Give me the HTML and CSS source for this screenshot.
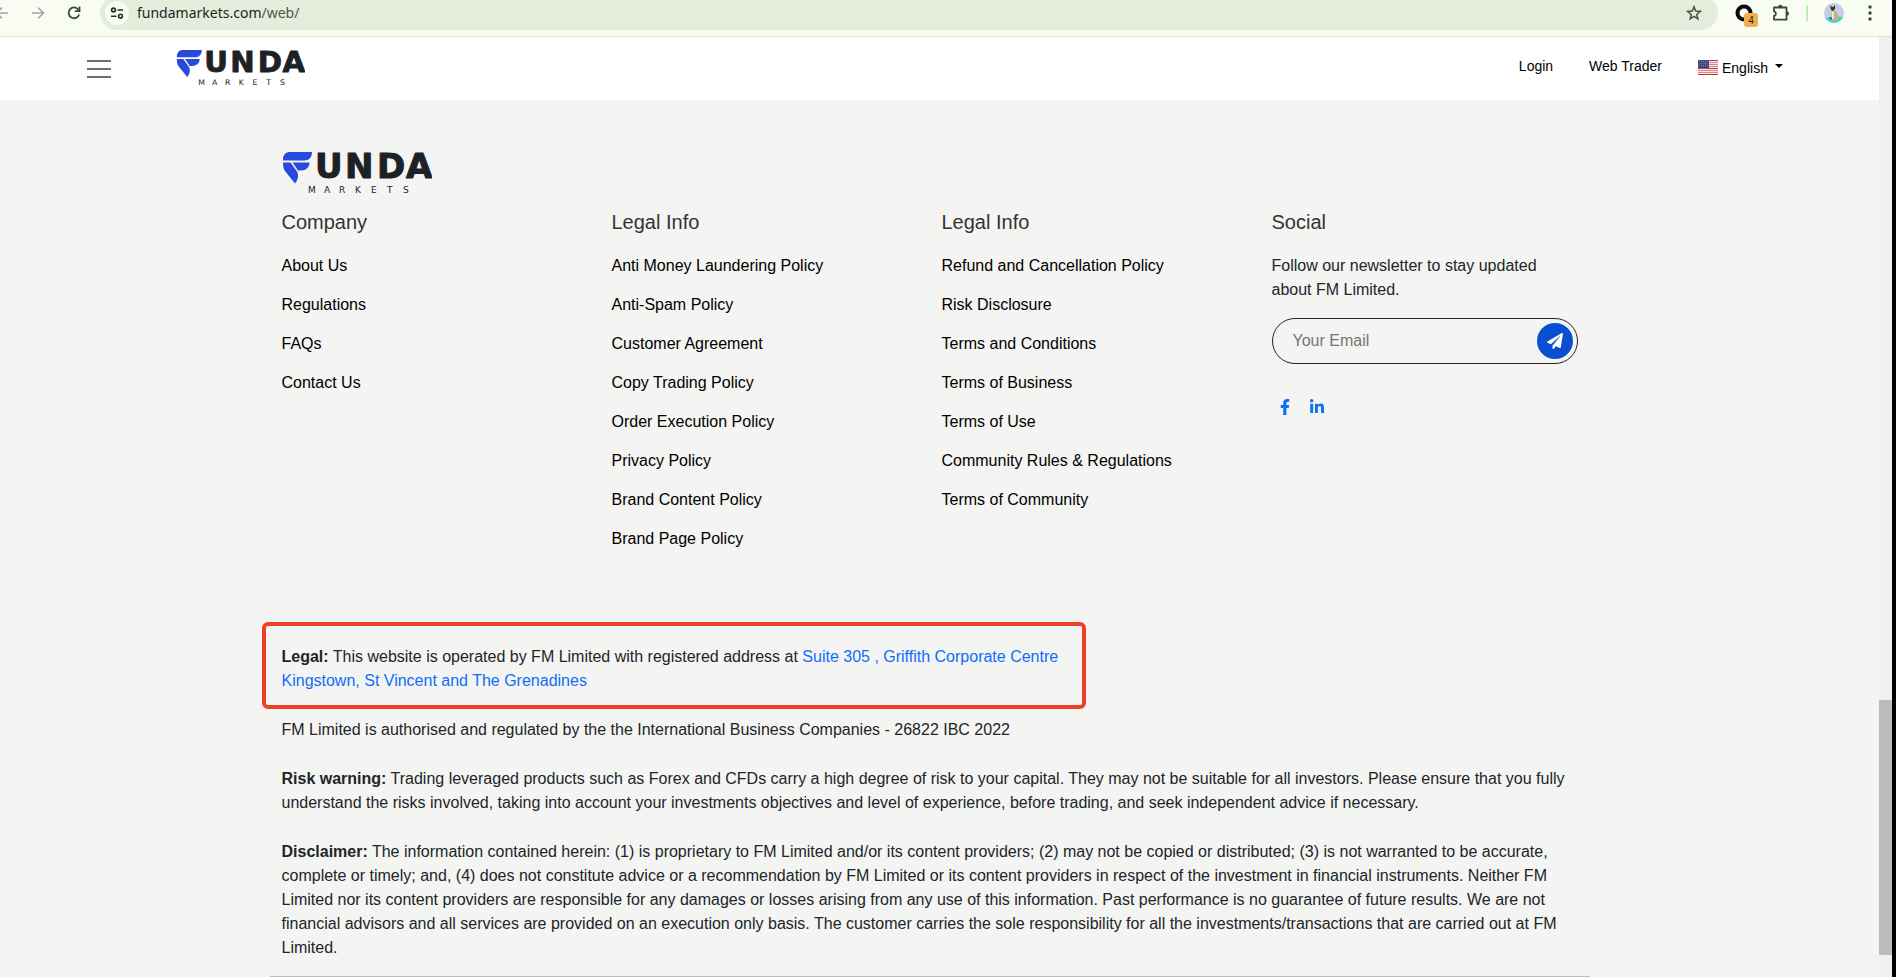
FILE: index.html
```html
<!DOCTYPE html>
<html lang="en">
<head>
  <meta charset="UTF-8">
  <meta name="viewport" content="width=device-width, initial-scale=1.0">
  <title>Funda Markets</title>
  <link rel="stylesheet" href="styles.css">
</head>
<body>
  <div class="browser">
    <div class="browser-bar">
      <button class="bar-btn back" aria-label="Back">
        <svg width="16" height="16" viewBox="0 0 16 16" fill="none" stroke="#a3a7a0" stroke-width="1.6"><path d="M14 8H3M8 2.500 2.500 8 8 13.500"/></svg>
      </button>
      <button class="bar-btn forward" aria-label="Forward">
        <svg width="16" height="16" viewBox="0 0 16 16" fill="none" stroke="#a3a7a0" stroke-width="1.6"><path d="M2 8h11M8 2.500 13.500 8 8 13.500"/></svg>
      </button>
      <button class="bar-btn reload" aria-label="Reload">
        <svg width="16" height="16" viewBox="0 0 16 16" fill="none" stroke="#3a4a38" stroke-width="1.8"><path d="M13.200 9.500A5.400 5.400 0 1 1 12.300 4.500L13.500 6"/><path d="M13.500 1.500V6.200H8.800"/></svg>
      </button>
      <div class="address">
        <button class="site-info" aria-label="Site information">
          <svg width="14" height="14" viewBox="0 0 14 14" fill="none" stroke="#20301f" stroke-width="1.6"><circle cx="3.500" cy="4" r="1.900"/><path d="M7.500 4H13M1 10.200H6.500"/><circle cx="10.500" cy="10.200" r="1.900"/></svg>
        </button>
        <span class="url">fundamarkets.com<span class="path">/web/</span></span>
        <button class="bar-btn star" aria-label="Bookmark">
          <svg width="16" height="16" viewBox="0 0 16 16" fill="none" stroke="#4a5348" stroke-width="1.5"><path d="M8 1.800 9.700 6.100 14.300 6.400 10.800 9.400 11.900 13.900 8 11.400 4.100 13.900 5.200 9.400 1.700 6.400 6.300 6.100Z"/></svg>
        </button>
      </div>
      <button class="bar-btn extension" aria-label="Extension">
        <svg width="18" height="18" viewBox="0 0 18 18" fill="none" stroke="#0a0a0a" stroke-width="4"><circle cx="9" cy="9" r="6.500"/></svg>
        <span class="badge">4</span>
      </button>
      <button class="bar-btn puzzle" aria-label="Extensions">
        <svg width="18" height="18" viewBox="0 0 18 18" fill="none" stroke="#3a4a38" stroke-width="1.800" stroke-linejoin="round"><path d="M2 3.500H14.500V15.700H2V12A2.400 2.400 0 0 0 2 7.300Z"/><path d="M6 3A2.300 2.300 0 0 1 10.600 3ZM15 7.500A2.100 2.100 0 0 1 15 11.700Z" fill="#3a4a38" stroke="none"/></svg>
      </button>
      <span class="divider"></span>
      <button class="bar-btn avatar" aria-label="Profile">
        <svg width="20" height="20" viewBox="0 0 20 20"><defs><clipPath id="round"><circle cx="10" cy="10" r="10"/></clipPath></defs><g clip-path="url(#round)"><path fill="#c5cee9" d="M0 0h20v20H0z"/><path fill="#4ed0cb" d="M0 15q10-2 20-1v6H0z"/><path fill="#c8ad84" d="M8 7l4 1 3 6-1 3H7z"/><path fill="#eee4cf" d="M8 8l2 1v7H8z"/><path fill="#3a342f" d="M6 2l2 2h1l2-2v4L9 8 7 7zM5 14l3 1-1 2z"/></g></svg>
      </button>
      <button class="bar-btn menu-dots" aria-label="Menu">
        <svg width="4" height="16" viewBox="0 0 4 16" fill="#3a4a38"><circle cx="2" cy="2" r="1.700"/><circle cx="2" cy="8" r="1.700"/><circle cx="2" cy="14" r="1.700"/></svg>
      </button>
    </div>

    <div class="viewport">
      <div class="page">
        <header class="header">
          <button class="hamburger" aria-label="Open menu"><span></span><span></span><span></span></button>
          <a class="brand" href="#" aria-label="Funda Markets">
            <svg viewBox="0 0 150 42">
              <g fill="#2749dc">
                <path d="M8 0H30C30 5 27 8.500 22 8.500H1V6C2 2 4 0 8 0Z"/>
                <path d="M1 10.500H8.500L15 19.500C17 23 16 28 13 31.500L3 19C1.500 17 1 14 1 10.500Z"/>
                <path d="M10.500 10.500H27.500C27.500 15 24 18.500 19 18.500H16Z"/>
              </g>
              <text class="logo-name" x="33 63 95 124" y="26">UNDA</text>
              <text class="logo-sub" x="26 42 57 73 89 105 121" y="41">MARKETS</text>
            </svg>
          </a>
          <nav class="nav">
            <a href="#">Login</a>
            <a href="#">Web Trader</a>
            <div class="language">
              <svg width="20" height="15" viewBox="0 0 20 15" aria-hidden="true"><path fill="#f4e4e5" d="M0 0h20v15H0z"/><path stroke="#c43c48" d="M0 .5h20M0 14.500h20M0 8.500h20"/><path stroke="#d98a91" d="M0 2.500h20M0 4.500h20M0 6.500h20M0 10.500h20M0 12.500h20"/><path fill="#3b4a79" d="M0 0h11v8H0z"/><path stroke="#7280a8" stroke-dasharray="1 1" d="M1 1.500h9M2 3.500h8M1 5.500h9"/></svg>
              <select aria-label="Language">
                <option>English</option>
              </select>
            </div>
          </nav>
        </header>

        <footer class="footer">
          <div class="container">
            <a class="footer-logo" href="#" aria-label="Funda Markets">
              <svg viewBox="0 0 150 42">
                <g fill="#2749dc">
                  <path d="M8 0H30C30 5 27 8.500 22 8.500H1V6C2 2 4 0 8 0Z"/>
                  <path d="M1 10.500H8.500L15 19.500C17 23 16 28 13 31.500L3 19C1.500 17 1 14 1 10.500Z"/>
                  <path d="M10.500 10.500H27.500C27.500 15 24 18.500 19 18.500H16Z"/>
                </g>
                <text class="logo-name" x="33 63 95 124" y="26">UNDA</text>
                <text class="logo-sub" x="26 42 57 73 89 105 121" y="41">MARKETS</text>
              </svg>
            </a>
            <div class="columns">
              <div class="column">
                <h5>Company</h5>
                <ul>
                  <li><a href="#">About Us</a></li>
                  <li><a href="#">Regulations</a></li>
                  <li><a href="#">FAQs</a></li>
                  <li><a href="#">Contact Us</a></li>
                </ul>
              </div>
              <div class="column">
                <h5>Legal Info</h5>
                <ul>
                  <li><a href="#">Anti Money Laundering Policy</a></li>
                  <li><a href="#">Anti-Spam Policy</a></li>
                  <li><a href="#">Customer Agreement</a></li>
                  <li><a href="#">Copy Trading Policy</a></li>
                  <li><a href="#">Order Execution Policy</a></li>
                  <li><a href="#">Privacy Policy</a></li>
                  <li><a href="#">Brand Content Policy</a></li>
                  <li><a href="#">Brand Page Policy</a></li>
                </ul>
              </div>
              <div class="column">
                <h5>Legal Info</h5>
                <ul>
                  <li><a href="#">Refund and Cancellation Policy</a></li>
                  <li><a href="#">Risk Disclosure</a></li>
                  <li><a href="#">Terms and Conditions</a></li>
                  <li><a href="#">Terms of Business</a></li>
                  <li><a href="#">Terms of Use</a></li>
                  <li><a href="#">Community Rules &amp; Regulations</a></li>
                  <li><a href="#">Terms of Community</a></li>
                </ul>
              </div>
              <div class="column">
                <h5>Social</h5>
                <p>Follow our newsletter to stay updated about FM Limited.</p>
                <form class="newsletter">
                  <input type="email" placeholder="Your Email" aria-label="Your Email">
                  <button type="button" aria-label="Subscribe">
                    <svg width="16" height="16" viewBox="0 0 512 512" fill="#fff"><path d="M476 3.200L12.500 270.600c-18.100 10.400-15.800 35.600 2.200 43.200L121 358.400l287.300-253.200c5.500-4.900 13.300 2.600 8.600 8.300L176 407v80.500c0 23.600 28.500 32.900 42.500 15.800L282 426l124.600 52.200c14.200 6 30.400-2.900 33-18.200l72-432C515 7.800 493.300-6.800 476 3.200z"/></svg>
                  </button>
                </form>
                <div class="social">
                  <a href="#" aria-label="Facebook"><svg width="10" height="16" viewBox="0 0 320 512"><path d="M279.140 288l14.220-92.660h-88.910v-60.130c0-25.350 12.420-50.060 52.240-50.060h40.420V6.260S260.430 0 225.360 0c-73.220 0-121.080 44.380-121.080 124.720v70.620H22.890V288h81.390v224h100.170V288z"/></svg></a>
                  <a href="#" aria-label="LinkedIn"><svg width="14" height="16" viewBox="0 0 448 512"><path d="M100.280 448H7.400V148.900h92.880zM53.790 108.100C24.090 108.100 0 83.500 0 53.800a53.790 53.790 0 0 1 107.580 0c0 29.700-24.100 54.300-53.790 54.300zM447.900 448h-92.680V302.400c0-34.700-.7-79.200-48.290-79.200-48.290 0-55.690 37.700-55.690 76.700V448h-92.780V148.900h89.080v40.800h1.300c12.400-23.500 42.690-48.300 88.180-48.300 94.280 0 111.280 62.100 111.280 142.800V448z"/></svg></a>
                </div>
              </div>
            </div>

            <div class="legal">
              <p class="address-note"><b>Legal:</b> This website is operated by FM Limited with registered address at <a href="#">Suite 305 , Griffith Corporate Centre<br>Kingstown, St Vincent and The Grenadines</a></p>
              <p>FM Limited is authorised and regulated by the the International Business Companies - 26822 IBC 2022</p>
              <p><b>Risk warning:</b> Trading leveraged products such as Forex and CFDs carry a high degree of risk to your capital. They may not be suitable for all investors. Please ensure that you fully understand the risks involved, taking into account your investments objectives and level of experience, before trading, and seek independent advice if necessary.</p>
              <p><b>Disclaimer:</b> The information contained herein: (1) is proprietary to FM Limited and/or its content providers; (2) may not be copied or distributed; (3) is not warranted to be accurate, complete or timely; and, (4) does not constitute advice or a recommendation by FM Limited or its content providers in respect of the investment in financial instruments. Neither FM Limited nor its content providers are responsible for any damages or losses arising from any use of this information. Past performance is no guarantee of future results. We are not financial advisors and all services are provided on an execution only basis. The customer carries the sole responsibility for all the investments/transactions that are carried out at FM Limited.</p>
            </div>
          </div>
          <hr class="line">
        </footer>
      </div>
      <div class="scrollbar"><div class="thumb"></div></div>
    </div>
  </div>
</body>
</html>
```
FILE: styles.css
```css
*,
*::before,
*::after {
  box-sizing: border-box;
}

body {
  margin: 0;
  font-family: "Liberation Sans", Arial, sans-serif;
  font-size: 16px;
  line-height: 24px;
  color: #212529;
}

a {
  color: #0d6efd;
  text-decoration: none;
}

button {
  padding: 0;
  border: none;
  background: none;
  cursor: pointer;
}

svg {
  display: block;
}

.browser {
  display: flex;
  flex-direction: column;
  height: 100vh;
  overflow: hidden;
  border-right: 4px solid #000;
}

/* browser toolbar */
.browser-bar {
  display: flex;
  flex: none;
  align-items: center;
  height: 37px;
  padding: 0 20px 10px 0;
  background-color: #f8fcf2;
  border-bottom: 1px solid #dce4d0;
}

.bar-btn {
  flex: none;
}

.back {
  margin-left: -6px;
}

.forward {
  margin-left: 20px;
}

.reload {
  margin-left: 20px;
}

.address {
  display: flex;
  flex: 1;
  align-items: center;
  height: 34px;
  margin-left: 18px;
  padding: 0 16px 0 5px;
  border-radius: 17px;
  background-color: #e4ecdc;
}

.site-info {
  display: flex;
  align-items: center;
  justify-content: center;
  width: 24px;
  height: 24px;
  border-radius: 50%;
  background-color: #f8fcf2;
}

.url {
  flex: 1;
  margin-left: 8px;
  font-family: "Noto Sans", "Open Sans", sans-serif;
  font-size: 14px;
  color: #1c1f1b;
}

.url .path {
  color: #4f564d;
}

.extension {
  position: relative;
  margin-left: 17px;
}

.badge {
  position: absolute;
  left: 9px;
  top: 9px;
  width: 14px;
  height: 14px;
  border-radius: 3px;
  background-color: #f0ad4e;
  font-family: "Liberation Sans", Arial, sans-serif;
  font-size: 10px;
  line-height: 15px;
  color: #222;
}

.puzzle {
  margin-left: 19px;
}

.divider {
  width: 2px;
  height: 16px;
  margin: 0 16px;
  background-color: #bdeeb0;
}

.menu-dots {
  margin-left: 24px;
}

/* page and scrollbar */
.viewport {
  display: flex;
  flex: 1;
  min-height: 0;
}

.page {
  flex: 1;
  background-color: #f4f4f2;
}

.scrollbar {
  display: grid;
  grid-template-rows: 663fr 255fr 22fr;
  width: 13px;
  background-color: #f0f0f0;
}

.thumb {
  grid-row: 2;
  background-color: #bcbcbc;
}

.header {
  display: flex;
  align-items: center;
  height: 63px;
  padding: 0 96px 0 87px;
  background-color: #fff;
}

.hamburger {
  display: flex;
  flex-direction: column;
  gap: 6px;
  width: 24px;
}

.hamburger span {
  height: 2px;
  background-color: #6f6f6f;
}

.brand {
  width: 129px;
  margin-left: 65px;
}

.logo-name {
  font-family: "DejaVu Sans", sans-serif;
  font-size: 34px;
  font-weight: bold;
  fill: #1c2126;
  stroke: #1c2126;
  stroke-linejoin: round;
}

.logo-sub {
  font-family: "DejaVu Sans", sans-serif;
  font-size: 9px;
  fill: #1c2126;
}

.nav {
  display: flex;
  align-items: center;
  gap: 36px;
  margin-left: auto;
  padding-bottom: 6px;
  font-size: 14px;
}

.nav a {
  color: #000;
}

.language {
  display: flex;
  align-items: center;
  gap: 4px;
  padding-top: 4px;
}

.language::after {
  content: "";
  margin: 0 0 4px -8px;
  border: 4px solid transparent;
  border-top-color: #000;
  border-bottom: 0;
  pointer-events: none;
}

.language select {
  appearance: none;
  padding: 0 11px 0 0;
  border: none;
  background: none;
  font-family: inherit;
  font-size: 14px;
  color: #000;
}

/* footer */
.footer {
  padding: 52px 20px 0 0;
}

.container {
  max-width: 1320px;
  margin: 0 auto;
  padding: 0 12px;
}

.footer-logo {
  display: block;
  width: 150px;
  margin-bottom: 16px;
}

.columns {
  display: grid;
  grid-template-columns: repeat(4, 1fr);
  gap: 24px;
}

.column h5 {
  margin: 0 0 20px;
  font-size: 20px;
  font-weight: normal;
  line-height: 24px;
  color: #333;
}

.column ul {
  margin: 0;
  padding: 0;
  list-style: none;
}

.column li {
  margin-bottom: 15px;
}

.column li a {
  color: #000;
}

.column p {
  margin: 0 0 16px;
}

.newsletter {
  display: flex;
  align-items: center;
  height: 46px;
  padding: 0 4px 0 20px;
  border: 1px solid #222;
  border-radius: 23px;
}

.newsletter input {
  flex: 1;
  min-width: 0;
  padding: 0;
  border: none;
  outline: none;
  background: none;
  font-family: inherit;
  font-size: 16px;
}

.newsletter input::placeholder {
  color: #757575;
}

.newsletter button {
  display: flex;
  align-items: center;
  justify-content: center;
  width: 36px;
  height: 36px;
  border-radius: 50%;
  background-color: #0850d0;
}

.social {
  display: flex;
  gap: 20px;
  margin-top: 35px;
  padding-left: 8px;
}

.social svg {
  fill: #0d6efd;
}

.legal {
  margin-top: 79px;
}

.legal p {
  margin: 0 0 25px;
}

.address-note {
  position: relative;
}

/* red frame around the registered address */
.address-note::before {
  content: "";
  position: absolute;
  left: -20px;
  top: -23px;
  width: 824px;
  height: 87px;
  border: 4px solid #ee4026;
  border-radius: 6px;
  pointer-events: none;
}

.legal p:last-child {
  margin-bottom: 16px;
}

.line {
  max-width: 1320px;
  margin: 0 auto;
  border: none;
  border-top: 1px solid #bcbdbd;
}
```
